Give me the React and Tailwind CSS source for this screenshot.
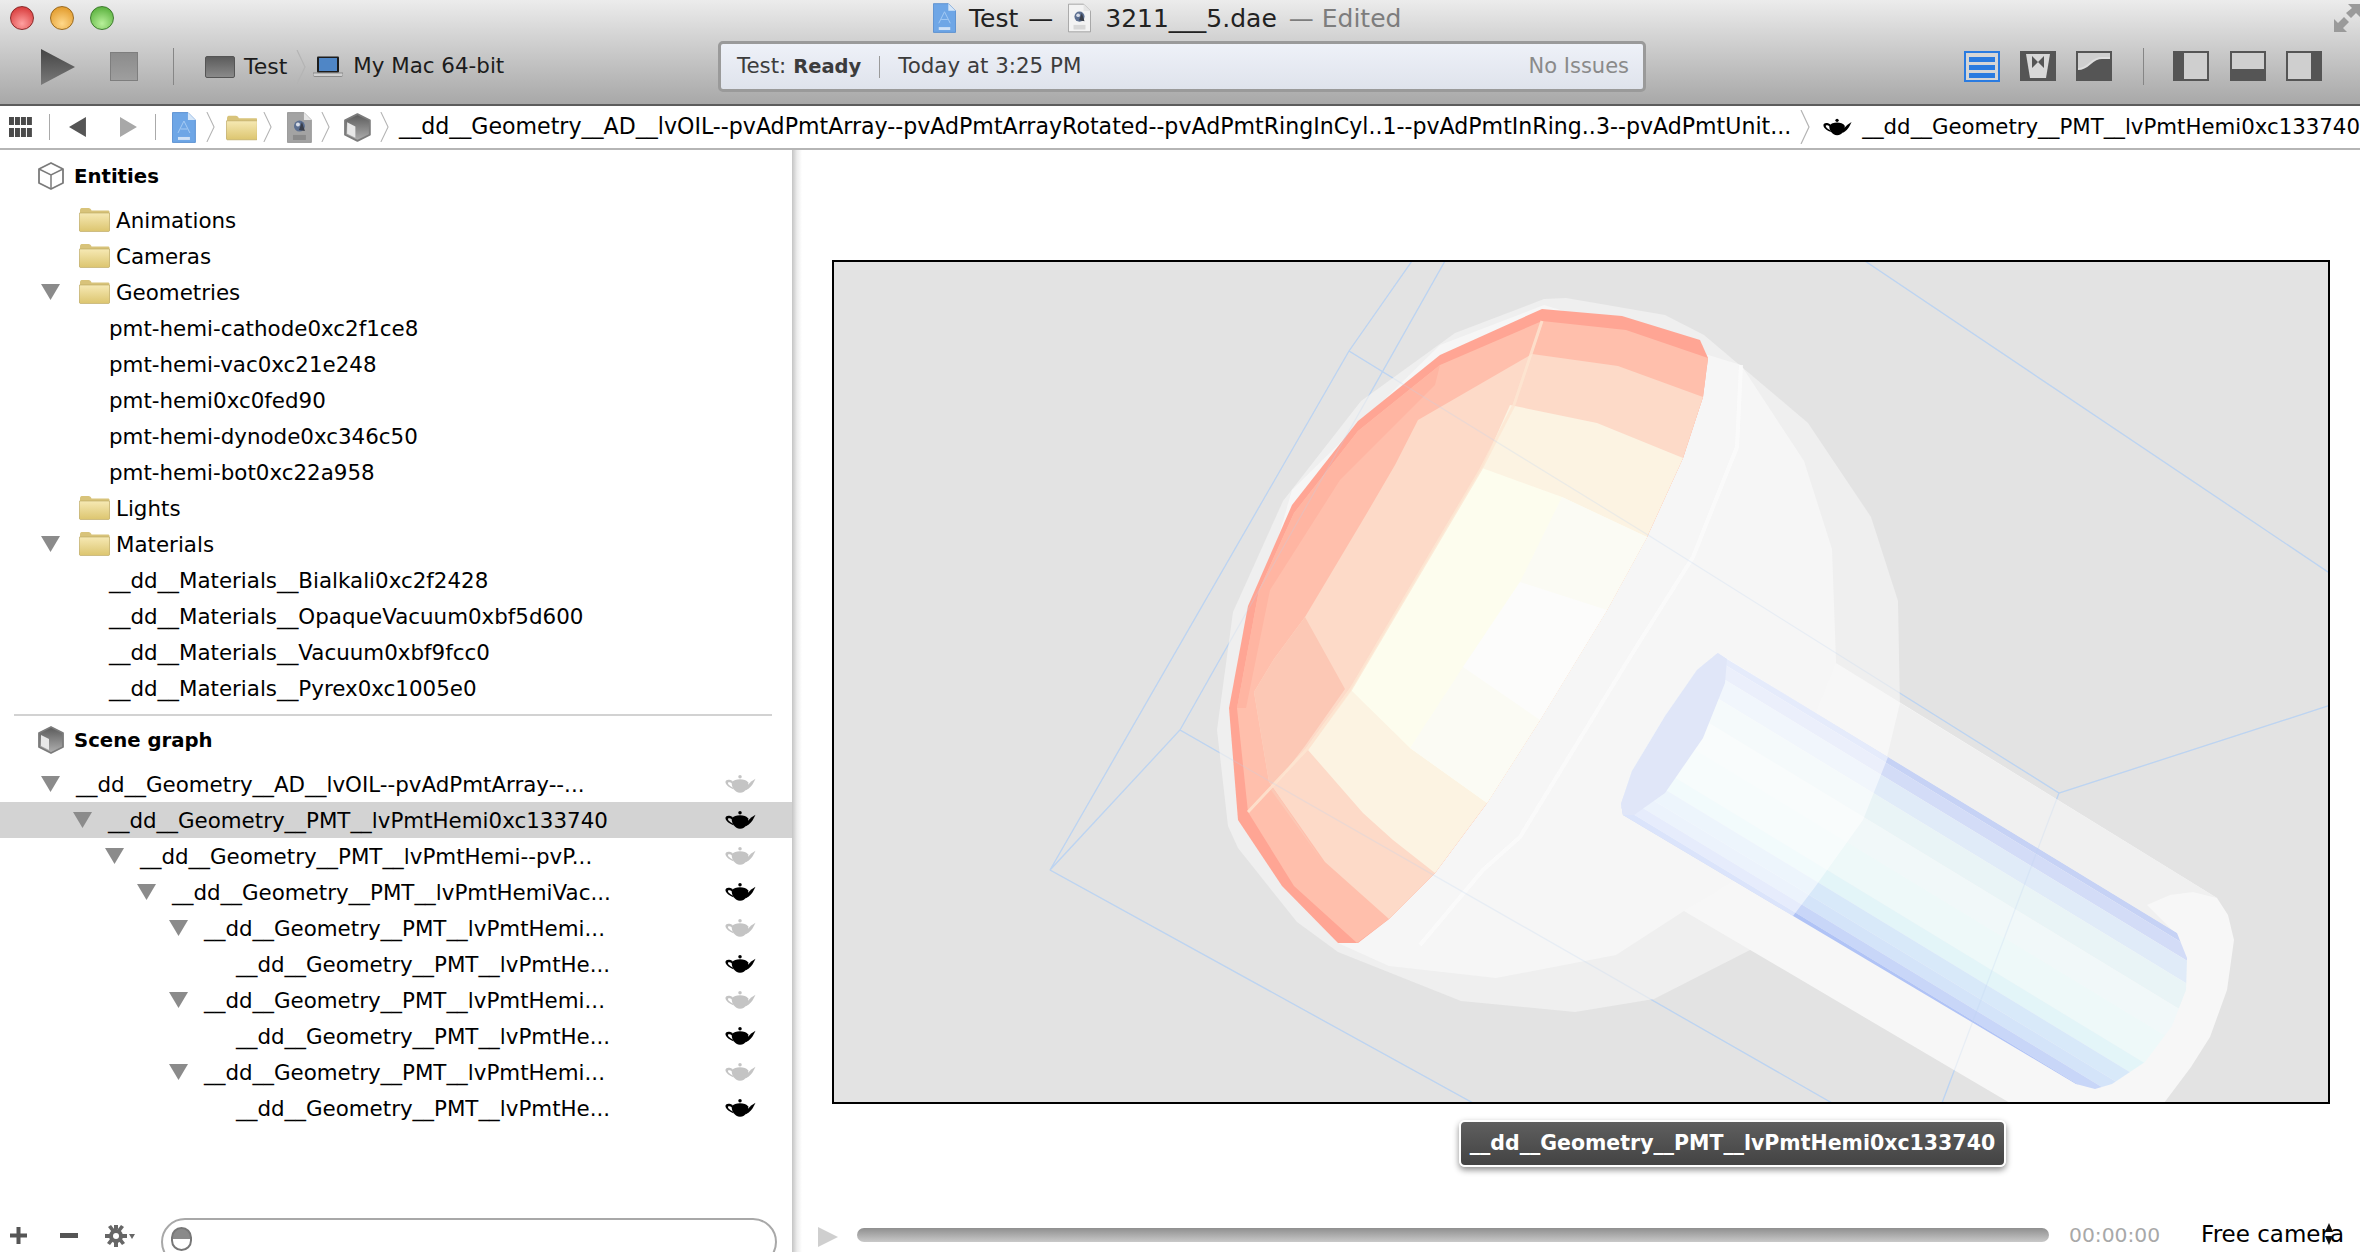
import React from "react";

function Teapot({ color = "#000", className = "w-[31px] h-[20px]" }) {
  return (
    <svg viewBox="0 0 32 20" className={className} fill={color}>
      <circle cx="15.5" cy="2.6" r="1.8" />
      <path d="M7 8.5C10 4 21 4 24 8.5C24.5 13 21.5 19 15.5 19C10 19 6.5 13 7 8.5Z" />
      <path d="M8 7C4 4.5 0 5.5 0.5 8.5C1 11.5 5 14 9 15.5L8 13.5C5.500 12.500 3 10.500 3 9C3 7.500 5.500 8 7.500 9.500Z" />
      <path d="M22 12.500L27 7.500L31.500 4.500L29.500 8.500C28 11.500 25.500 14.500 21.500 16.500Z" />
    </svg>
  );
}

function Folder({ className = "w-[31px] h-[25px]" }) {
  return (
    <svg viewBox="0 0 31 25" className={className}>
      <defs>
        <linearGradient id="fld" x1="0" y1="0" x2="0" y2="1">
          <stop offset="0" stopColor="#f6e9b4" />
          <stop offset="1" stopColor="#dcc56f" />
        </linearGradient>
      </defs>
      <path d="M1 3.500C1 1.500 2 1 3.500 1H9.500C11 1 12 2 12.500 3.500H29C30 3.500 30.500 4 30.500 5V24H0.500Z" fill="#d8c37a" />
      <path d="M0.500 6H30.500V23.500C30.500 24 30 24.500 29.500 24.500H1.500C1 24.500 0.500 24 0.500 23.500Z" fill="url(#fld)" stroke="#b8a45f" strokeWidth="0.6" />
    </svg>
  );
}

function Tri({ hidden }) {
  return (
    <svg viewBox="0 0 19 18" className={`w-[19px] h-[18px] shrink-0 ${hidden ? "invisible" : ""}`}>
      <path d="M0 1H19L9.500 17Z" fill="#8b8b8b" />
    </svg>
  );
}

function Chev({ className = "w-[10px] h-[34px]" }) {
  return (
    <svg viewBox="0 0 10 34" className={className} fill="none" preserveAspectRatio="none">
      <path d="M1 0L9 17L1 34" stroke="#b4b4b4" strokeWidth="1.200" />
    </svg>
  );
}

function ProjIcon({ className = "w-[24px] h-[31px]" }) {
  return (
    <svg viewBox="0 0 24 31" className={className}>
      <path d="M0.500 0.500H16L23.500 8V30.500H0.500Z" fill="#6ea6e6" stroke="#4c86cc" strokeWidth="0.800" />
      <path d="M16 0.500V8H23.500Z" fill="#d5e6f8" />
      <path d="M6 21L12 9L18 21M8.500 17H15.500" stroke="#a5cbf3" strokeWidth="1" fill="none" />
      <rect x="6" y="25" width="12" height="3" fill="#cfe1f6" />
    </svg>
  );
}

function DaeIcon({ className = "w-[25px] h-[31px]", dark }) {
  return (
    <svg viewBox="0 0 25 31" className={className}>
      <path d="M0.500 0.500H17L24.500 8V30.500H0.500Z" fill={dark ? "#a3a3a3" : "#f3f3f3"} stroke="#8f8f8f" strokeWidth="0.800" />
      <path d="M17 0.500V8H24.500Z" fill="#e5e5e5" />
      <circle cx="12.500" cy="14" r="5.500" fill="#5c6f90" />
      <circle cx="11" cy="12.500" r="2" fill="#d8dde8" />
      <path d="M15 10L18 19L12 18Z" fill="#3a3f4a" />
      <rect x="6" y="23" width="13" height="5" fill={dark ? "#8a8a8a" : "#d8d8d8"} />
    </svg>
  );
}

function Cube({ filled, className = "w-[26px] h-[28px]" }) {
  return (
    <svg viewBox="0 0 26 28" className={className}>
      <defs>
        <linearGradient id="cubeg" x1="0" y1="0" x2="0" y2="1">
          <stop offset="0" stopColor="#5a5a5a" />
          <stop offset="1" stopColor="#b0b0b0" />
        </linearGradient>
      </defs>
      <path d="M13 1L25 7V21L13 27L1 21V7Z" fill={filled ? "url(#cubeg)" : "#fff"} stroke="#7b7b7b" strokeWidth="1.800" strokeLinejoin="round" />
      {filled ? (
        <path d="M3 9L11 13V24L3 20Z" fill="#e8e8e8" />
      ) : (
        <path d="M1 7L13 13L25 7M13 13V27" stroke="#7b7b7b" strokeWidth="1.500" fill="none" />
      )}
    </svg>
  );
}

function ViewBtn({ children }) {
  return (
    <svg viewBox="0 0 36 31" className="w-[36px] h-[31px]">
      {children}
    </svg>
  );
}

function Light({ className }) {
  return <div className={`w-[24px] h-[24px] rounded-full border ${className}`} />;
}

const entities = [
  { t: "Animations", folder: true },
  { t: "Cameras", folder: true },
  { t: "Geometries", folder: true, open: true },
  { t: "pmt-hemi-cathode0xc2f1ce8" },
  { t: "pmt-hemi-vac0xc21e248" },
  { t: "pmt-hemi0xc0fed90" },
  { t: "pmt-hemi-dynode0xc346c50" },
  { t: "pmt-hemi-bot0xc22a958" },
  { t: "Lights", folder: true },
  { t: "Materials", folder: true, open: true },
  { t: "__dd__Materials__Bialkali0xc2f2428" },
  { t: "__dd__Materials__OpaqueVacuum0xbf5d600" },
  { t: "__dd__Materials__Vacuum0xbf9fcc0" },
  { t: "__dd__Materials__Pyrex0xc1005e0" },
];

const scene = [
  { t: "__dd__Geometry__AD__lvOIL--pvAdPmtArray--...", pad: "pl-[41px]", grey: true },
  { t: "__dd__Geometry__PMT__lvPmtHemi0xc133740", pad: "pl-[73px]", sel: true },
  { t: "__dd__Geometry__PMT__lvPmtHemi--pvP...", pad: "pl-[105px]", grey: true },
  { t: "__dd__Geometry__PMT__lvPmtHemiVac...", pad: "pl-[137px]" },
  { t: "__dd__Geometry__PMT__lvPmtHemi...", pad: "pl-[169px]", grey: true },
  { t: "__dd__Geometry__PMT__lvPmtHe...", pad: "pl-[201px]", leaf: true },
  { t: "__dd__Geometry__PMT__lvPmtHemi...", pad: "pl-[169px]", grey: true },
  { t: "__dd__Geometry__PMT__lvPmtHe...", pad: "pl-[201px]", leaf: true },
  { t: "__dd__Geometry__PMT__lvPmtHemi...", pad: "pl-[169px]", grey: true },
  { t: "__dd__Geometry__PMT__lvPmtHe...", pad: "pl-[201px]", leaf: true },
];

const stripes = [
  [0, 7, "#c6d2f5"],
  [7, 22, "#d3dcf7"],
  [22, 45, "#e0ebf8"],
  [45, 75, "#e9f4f6"],
  [75, 110, "#f1f8f9"],
  [110, 150, "#eef9f9"],
  [150, 168, "#e3f5f8"],
  [168, 186, "#d8e9f9"],
  [186, 200, "#d4e4f9"],
  [200, 212, "#c8d6f8"],
  [212, 225, "#b0c3f6"],
];

function stripePoints(a, b) {
  const y = (x, d) => 757 + 0.608 * (x - 1888) + d;
  const x0 = 1600;
  const x1 = 2220;
  return `${x0},${y(x0, a)} ${x1},${y(x1, a)} ${x1},${y(x1, b)} ${x0},${y(x0, b)}`;
}

function Wires({ color, opacity = 1 }) {
  return (
    <g stroke={color} strokeWidth="1.200" fill="none" opacity={opacity}>
      <path d="M1412 261L1349 351L1050 870L1180 730L1445 261" />
      <path d="M1050 870L1473 1103" />
      <path d="M1349 351L1648 535L2059 793L2331 705" />
      <path d="M1180 730L1832 1103" />
      <path d="M1865 261L2331 574" />
      <path d="M2059 793L1942 1103" />
    </g>
  );
}

function Scene3D() {
  return (
    <svg viewBox="834 262 1494 840" className="w-full h-full block">
      <defs>
        <clipPath id="innerTube">
          <path d="M1718 653L2177 933L2187 958L2186 990L2172 1026L2145 1062L2112 1084L2095 1089L2076 1084L1623 815L1621 804L1632 771L1665 716L1697 670Z" />
        </clipPath>
      </defs>
      <rect x="834" y="262" width="1494" height="840" fill="#e3e3e3" />
      <Wires color="#bcd4f2" />
      <path d="M1544 299L1566 298L1665 315L1704 335L1808 423L1871 517L1898 601L1900 711L1887 770L1845 848L1793 916L1752 949L1654 999L1575 1012L1461 1001L1338 952L1297 922L1238 848L1228 826L1217 730L1233 612L1283 501L1361 401L1455 333Z" fill="#efefef" />
      <path d="M1544 305L1741 365L1804 461L1832 549L1836 661L1836 900L1684 911L1616 955L1496 978L1389 966L1338 943L1250 835L1229 708L1292 490L1440 345Z" fill="#f6f6f6" />
      <path d="M1836 663L2217 898L2228 915L2234 940L2227 990L2210 1037L2191 1067L2164 1103L2010 1103L1684 911L1752 870Z" fill="#f7f7f7" />
      <path d="M1900 703L2217 898L2193 892L2170 895L2147 905L2177 935L1887 757Z" fill="#f0f0f0" />
      <path d="M1542 309L1622 316L1700 340L1708 358L1703 397L1683 458L1647 537L1607 610L1540 720L1487 803L1435 873L1389 919L1358 943L1338 943L1282 886L1238 820L1229 708L1248 606L1292 505L1358 421L1440 355Z" fill="#ffa594" />
      <path d="M1542 321L1626 330L1708 358L1703 397L1683 458L1647 537L1607 610L1540 720L1487 803L1435 873L1389 919L1357 943L1294 886L1248 812L1237 708L1259 590L1294 513L1358 431L1440 365Z" fill="#ffbfac" />
      <path d="M1440 365L1358 431L1294 513L1259 590L1237 708L1246 708L1270 590L1340 480L1435 385Z" fill="#ffb5a2" />
      <path d="M1532 354L1618 366L1703 397L1683 458L1647 537L1607 610L1540 720L1487 803L1435 873L1389 919L1325 862L1269 782L1254 692L1274 659L1305 617L1367 513L1395 465L1418 420Z" fill="#fddac8" />
      <path d="M1305 617L1274 659L1254 692L1269 782L1323 862L1271 790L1305 746L1345 689Z" fill="#fcc8b5" />
      <path d="M1510 405L1597 423L1683 458L1647 537L1607 610L1540 720L1487 803L1435 873L1393 840L1363 813L1308 750L1351 690L1482 468Z" fill="#fcf3e2" />
      <path d="M1482 468L1562 497L1647 537L1607 610L1540 720L1487 803L1410 748L1351 690Z" fill="#fdfdee" />
      <path d="M1562 497L1647 537L1607 610L1540 720L1487 803L1410 748L1463 667L1520 582Z" fill="#fbfbf4" />
      <path d="M1520 582L1607 610L1540 720L1463 667Z" fill="#fcfcfb" />
      <path d="M1542 321L1514 405L1481 469L1351 689L1307 749L1248 812" fill="none" stroke="#fde6d2" strokeWidth="3" opacity="0.8" />
      <path d="M1741 365L1737 447L1693 557L1630 657L1520 837L1483 870L1420 945" fill="none" stroke="#fbfbfb" strokeWidth="4" opacity="0.8" />
      <g clipPath="url(#innerTube)">
        {stripes.map(([a, b, c]) => (
          <polygon key={a} points={stripePoints(a, b)} fill={c} />
        ))}
      </g>
      <path d="M1718 653L1888 757L1863 820L1815 887L1793 916L1623 815L1621 804L1632 771L1665 716L1697 670Z" fill="#ffffff" opacity="0.55" />
      <path d="M1718 653L1727 659L1725 683L1703 738L1665 793L1634 815L1623 815L1621 804L1632 771L1665 716L1697 670Z" fill="#e0e6f8" />
      <Wires color="#bcd4f2" opacity="0.25" />
    </svg>
  );
}

export default function App() {
  return (
    <div className="w-[2360px] h-[1252px] flex flex-col overflow-hidden bg-white text-black font-['DejaVu_Sans',sans-serif] text-[21.4px]">
      <header className="h-[106px] shrink-0 flex flex-col bg-gradient-to-b from-[#ececec] to-[#a8a8a8] border-b-2 border-[#5c5c5c]">
        <div className="h-[36px] flex items-center text-[25px] text-[#222] whitespace-nowrap">
          <div className="w-[933px] flex items-center gap-[16px] pl-[10px]">
            <Light className="bg-[radial-gradient(circle_at_50%_75%,#ffa0a0,#d02828)] border-[#8a2a2a]" />
            <Light className="bg-[radial-gradient(circle_at_50%_75%,#ffd88a,#dc8f1a)] border-[#9a6a20]" />
            <Light className="bg-[radial-gradient(circle_at_50%_75%,#b8f09a,#48a52c)] border-[#3f7c30]" />
          </div>
          <ProjIcon className="w-[23px] h-[30px]" />
          <span className="ml-[13px] pt-[2px]">Test</span>
          <span className="ml-[10px] pt-[2px]">—</span>
          <DaeIcon className="ml-[15px] w-[23px] h-[30px]" />
          <span className="ml-[14px] pt-[2px]">3211___5.dae</span>
          <span className="ml-[12px] pt-[2px] text-[#7d7d7d]">— Edited</span>
          <div className="flex-1 flex justify-end">
            <svg viewBox="0 0 26 28" className="w-[26px] h-[28px]" fill="#9a9a9a">
              <path d="M0 28V15L4 19L10 13L15 18L9 24L13 28Z" />
              <path d="M26 0V13L22 9L17 14L12 9L18 4L14 0Z" />
            </svg>
          </div>
        </div>
        <div className="flex-1 flex items-start pt-[5px] whitespace-nowrap">
          <div className="flex items-center h-[51px] w-[718px] pl-[41px] text-[22px]">
            <svg viewBox="0 0 34 36" className="w-[34px] h-[36px]">
              <defs>
                <linearGradient id="pl" x1="0" y1="0" x2="0" y2="1">
                  <stop offset="0" stopColor="#454545" />
                  <stop offset="1" stopColor="#7a7a7a" />
                </linearGradient>
              </defs>
              <path d="M0 0L34 18L0 36Z" fill="url(#pl)" />
            </svg>
            <div className="ml-[35px] w-[28px] h-[29px] bg-gradient-to-b from-[#8c8c8c] to-[#9e9e9e] border border-[#7e7e7e]" />
            <div className="ml-[35px] w-[1px] h-[37px] bg-[#868686]" />
            <div className="ml-[31px] w-[30px] h-[22px] rounded-[2px] bg-gradient-to-b from-[#5c5c5c] to-[#8a8a8a] border border-[#555]" />
            <span className="ml-[9px] text-[#1c1c1c]">Test</span>
            <Chev className="ml-[9px] w-[10px] h-[34px]" />
            <svg viewBox="0 0 30 21" className="ml-[7px] w-[30px] h-[21px]">
              <rect x="4" y="0.500" width="22" height="16" rx="1" fill="#1d1d1d" />
              <rect x="6" y="2" width="18" height="13" fill="#4f86c6" />
              <path d="M0 17H30V19C30 20 29 20.500 28 20.500H2C1 20.500 0 20 0 19Z" fill="#d0d0d0" stroke="#666" strokeWidth="0.600" />
            </svg>
            <span className="ml-[10px] text-[#1c1c1c] text-[21.4px]">My Mac 64-bit</span>
          </div>
          <div className="w-[928px] h-[51px] rounded-[5px] border-[3px] border-[#9a9a9a] bg-gradient-to-b from-[#eef1f8] to-[#dfe3ec] flex items-center pl-[16px] pr-[14px] text-[#3c3c3c]">
            <span>
              Test: <span className="font-bold text-[19.5px]">Ready</span>
            </span>
            <div className="ml-[18px] w-[1px] h-[22px] bg-[#9a9a9a]" />
            <span className="ml-[18px]">Today at 3:25 PM</span>
            <span className="ml-auto text-[#8a8a8a] text-[21px]">No Issues</span>
          </div>
          <div className="flex-1 flex items-center h-[51px] pl-[318px]">
            <ViewBtn>
              <rect x="1" y="1" width="34" height="29" fill="#d6d6d6" stroke="#2a7be0" strokeWidth="2" />
              <rect x="5" y="6" width="26" height="5" fill="#2a7be0" />
              <rect x="5" y="14" width="26" height="5" fill="#2a7be0" />
              <rect x="5" y="22" width="26" height="5" fill="#2a7be0" />
            </ViewBtn>
            <div className="ml-[20px]">
              <ViewBtn>
                <rect width="36" height="30" fill="#555" />
                <path d="M6 3H30L26 27H10Z" fill="#d8d8d8" />
                <path d="M12 5L18 11L24 5V17L18 11L12 17Z" fill="#555" />
              </ViewBtn>
            </div>
            <div className="ml-[20px]">
              <ViewBtn>
                <rect width="36" height="30" fill="#555" />
                <rect x="2" y="2" width="32" height="26" fill="#cfcfcf" />
                <path d="M2 18C14 18 14 7 26 7H34V28H2Z" fill="#555" />
                <path d="M2 18C14 18 14 7 26 7H34" stroke="#dedede" strokeWidth="2" fill="none" />
              </ViewBtn>
            </div>
            <div className="ml-[31px] w-[1px] h-[37px] bg-[#868686]" />
            <div className="ml-[29px]">
              <ViewBtn>
                <rect width="36" height="30" fill="#555" />
                <rect x="11" y="2" width="23" height="26" fill="#cfcfcf" />
              </ViewBtn>
            </div>
            <div className="ml-[21px]">
              <ViewBtn>
                <rect width="36" height="30" fill="#555" />
                <rect x="2" y="2" width="32" height="16" fill="#cfcfcf" />
              </ViewBtn>
            </div>
            <div className="ml-[20px]">
              <ViewBtn>
                <rect width="36" height="30" fill="#555" />
                <rect x="2" y="2" width="23" height="26" fill="#cfcfcf" />
              </ViewBtn>
            </div>
          </div>
        </div>
      </header>

      <nav className="h-[44px] shrink-0 flex items-center whitespace-nowrap border-b-2 border-[#b5b5b5] bg-white pl-[9px] text-[22.1px]">
        <svg viewBox="0 0 23 20" className="w-[23px] h-[20px]" fill="#4a4a4a">
          <path d="M0 0h5v8H0zM6 0h5v8H6zM12 0h5v8h-5zM18 0h5v8h-5zM0 11h5v9H0zM6 11h5v9H6zM12 11h5v9h-5zM18 11h5v9h-5z" />
        </svg>
        <div className="ml-[17px] w-[1px] h-[26px] bg-[#aaa]" />
        <svg viewBox="0 0 17 20" className="ml-[19px] w-[17px] h-[20px]">
          <path d="M17 0V20L0 10Z" fill="#555" />
        </svg>
        <svg viewBox="0 0 17 20" className="ml-[34px] w-[17px] h-[20px]">
          <path d="M0 0V20L17 10Z" fill="#a8a8a8" />
        </svg>
        <div className="ml-[18px] w-[1px] h-[26px] bg-[#aaa]" />
        <ProjIcon className="ml-[16px] w-[24px] h-[31px]" />
        <Chev className="ml-[10px] w-[9px] h-[30px]" />
        <Folder className="ml-[11px] w-[32px] h-[27px]" />
        <Chev className="ml-[6px] w-[9px] h-[30px]" />
        <DaeIcon dark className="ml-[15px] w-[25px] h-[31px]" />
        <Chev className="ml-[9px] w-[9px] h-[30px]" />
        <Cube filled className="ml-[14px] w-[27px] h-[31px]" />
        <Chev className="ml-[9px] w-[9px] h-[30px]" />
        <span className="ml-[10px]">__dd__Geometry__AD__lvOIL--pvAdPmtArray--pvAdPmtArrayRotated--pvAdPmtRingInCyl..1--pvAdPmtInRing..3--pvAdPmtUnit...</span>
        <Chev className="ml-[9px] w-[10px] h-[34px] shrink-0" />
        <Teapot className="ml-[13px] w-[29px] h-[20px] shrink-0" />
        <span className="ml-[10px] text-[21.3px]">__dd__Geometry__PMT__lvPmtHemi0xc133740</span>
      </nav>

      <div className="flex-1 flex min-h-0">
        <aside className="w-[792px] shrink-0 flex flex-col overflow-hidden">
          <div className="h-[36px] mt-[8px] flex items-center pl-[38px] shrink-0">
            <Cube />
            <span className="ml-[10px] pt-[2px] font-bold text-[19.7px]">Entities</span>
          </div>
          <ul className="mt-[8px]">
            {entities.map((e) => (
              <li key={e.t} className="h-[36px] flex items-center whitespace-nowrap">
                {e.folder ? (
                  <div className="flex items-center pl-[41px]">
                    <Tri hidden={!e.open} />
                    <Folder className="ml-[19px] w-[31px] h-[25px]" />
                    <span className="ml-[6px] pt-[2px]">{e.t}</span>
                  </div>
                ) : (
                  <span className="pl-[109px] pt-[2px]">{e.t}</span>
                )}
              </li>
            ))}
          </ul>
          <div className="mt-[8px] mx-[14px] w-[758px] h-[2px] bg-[#d2d2d2] shrink-0" />
          <div className="h-[36px] mt-[6px] flex items-center pl-[38px] shrink-0">
            <Cube filled />
            <span className="ml-[10px] pt-[2px] font-bold text-[19.7px]">Scene graph</span>
          </div>
          <ul className="mt-[8px]">
            {scene.map((r, i) => (
              <li key={i} className={`h-[36px] flex items-center whitespace-nowrap pr-[36px] ${r.pad} ${r.sel ? "bg-[#d3d3d3]" : ""}`}>
                <Tri hidden={r.leaf} />
                <span className="ml-[16px] pt-[2px]">{r.t}</span>
                <Teapot color={r.grey ? "#c4c4c4" : "#000"} className="ml-auto w-[31px] h-[20px] shrink-0" />
              </li>
            ))}
          </ul>
          <div className="mt-auto h-[48px] flex items-start shrink-0 pl-[10px] pt-[14px]">
            <svg viewBox="0 0 17 17" className="w-[17px] h-[17px] mt-[9px]" fill="#555">
              <path d="M6.500 0h4v6.500H17v4h-6.500V17h-4v-6.500H0v-4h6.500z" />
            </svg>
            <div className="ml-[33px] mt-[15px] w-[18px] h-[5px] bg-[#555]" />
            <svg viewBox="0 0 30 24" className="ml-[27px] mt-[6px] w-[30px] h-[24px]" fill="#666">
              <circle cx="11" cy="12" r="7" />
              <path d="M9 1h4v22H9zM0 10h22v4H0zM3 3l3-2 14 18-3 2zM19 3l-3-2L2 19l3 2z" />
              <circle cx="11" cy="12" r="3" fill="#fff" />
              <path d="M24 10h6l-3 5z" />
            </svg>
            <div className="ml-[26px] w-[616px] h-[48px] rounded-full border-2 border-[#a8a8a8] shrink-0 pl-[8px] pt-[7px]">
              <div className="w-[21px] h-[24px] rounded-full border-2 border-[#777] bg-[linear-gradient(to_bottom,#8a8a8a_50%,#ffffff_50%)]" />
            </div>
          </div>
        </aside>
        <div className="w-[10px] shrink-0 bg-gradient-to-r from-[#c4c4c4] via-[#ececec] to-white" />

        <main className="flex-1 flex flex-col min-w-0 pl-[30px] pt-[110px]">
          <div className="w-[1498px] h-[844px] border-2 border-black shrink-0">
            <Scene3D />
          </div>
          <div className="mt-[16px] ml-[627px] w-[547px] h-[47px] rounded-[6px] border-2 border-white bg-gradient-to-b from-[#5f5f5f] to-[#434343] shadow-[0_3px_6px_rgba(0,0,0,0.45)] flex items-center justify-center text-white font-bold text-[20.5px] whitespace-nowrap shrink-0">
            __dd__Geometry__PMT__lvPmtHemi0xc133740
          </div>
          <div className="mt-auto h-[48px] flex items-start -ml-[14px] whitespace-nowrap shrink-0">
            <svg viewBox="0 0 20 20" className="w-[20px] h-[20px] mt-[23px]">
              <path d="M0 0V20L20 10Z" fill="#cfcfcf" />
            </svg>
            <div className="ml-[19px] mt-[24px] w-[1192px] h-[14px] rounded-full bg-gradient-to-b from-[#8f8f8f] to-[#c9c9c9]" />
            <span className="ml-[20px] mt-[16px] text-[#a8a8a8] text-[20.3px]">00:00:00</span>
            <div className="ml-[41px] mt-[13px] relative text-[23px]">
              <span>Free camera</span>
              <svg viewBox="0 0 10 22" className="absolute right-[10px] top-[6px] w-[10px] h-[22px]" fill="#111">
                <path d="M5 0L9 9H1ZM5 22L1 13H9Z" />
              </svg>
            </div>
          </div>
        </main>
      </div>
    </div>
  );
}
